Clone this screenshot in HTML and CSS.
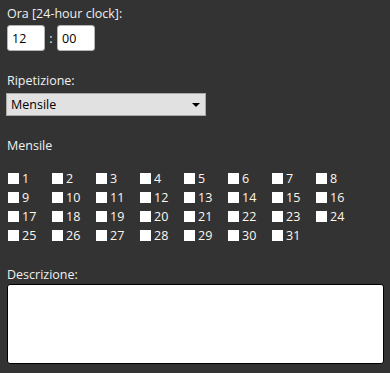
FILE: index.html
```html
<!DOCTYPE html>
<html lang="it">
<head>
  <meta charset="UTF-8">
  <title>Ripetizione</title>
  <link rel="stylesheet" href="styles.css">
</head>
<body>
  <form class="form" onsubmit="return false;">
    <div class="field">
      <label class="label">Ora [24-hour clock]:</label>
      <div class="time-row">
        <input type="text" class="time-input" value="12">
        <span class="colon">:</span>
        <input type="text" class="time-input" value="00">
      </div>
    </div>

    <div class="field">
      <label class="label">Ripetizione:</label>
      <div class="select">
        <span>Mensile</span>
        <span class="arrow"></span>
      </div>
    </div>

    <div class="field">
      <div class="section-title">Mensile</div>
      <div class="days" id="days"></div>
    </div>

    <div class="field">
      <label class="label">Descrizione:</label>
      <textarea class="desc"></textarea>
    </div>
  </form>

  <script>
    // days of the month
    const days = document.getElementById('days');
    for (let i = 1; i <= 31; i++) {
      const item = document.createElement('label');
      item.className = 'day';
      item.innerHTML = '<span class="box"></span>' + i;
      days.appendChild(item);
    }
  </script>
</body>
</html>
```

FILE: styles.css
```css
body {
  margin: 0;
  background: #333333;
  color: #f0f0f0;
  font-family: 'Open Sans', Arial, sans-serif;
  font-size: 12.5px;
}
.form {
  padding: 6px 6px 0 7px;
}
.field {
  margin-bottom: 22px;
}
.label, .section-title {
  display: block;
  line-height: 16px;
}
.time-row {
  display: flex;
  align-items: center;
  margin-top: 3px;
}
.time-input {
  width: 38px;
  height: 26px;
  box-sizing: border-box;
  border: 1px solid #b4b4b4;
  border-radius: 3px;
  padding: 0 4px;
  font-family: inherit;
  font-size: 12.5px;
  color: #000;
  background: #fff;
}
.colon {
  width: 12px;
  text-align: center;
}
.select {
  margin-top: 4px;
  margin-left: -1px;
  width: 200px;
  height: 23px;
  box-sizing: border-box;
  border: 1px solid #a9a9a9;
  background: #e1e1e1;
  color: #000;
  display: flex;
  align-items: center;
  justify-content: space-between;
  padding: 0 5px 0 4px;
}
.arrow {
  width: 0;
  height: 0;
  border-left: 4px solid transparent;
  border-right: 4px solid transparent;
  border-top: 4px solid #000;
}
.section-title {
  margin-top: 18px;
  margin-bottom: 15px;
}
.days {
  display: grid;
  grid-template-columns: repeat(8, 44px);
  grid-auto-rows: 19px;
  margin-left: 1px;
}
.day {
  display: flex;
  align-items: center;
  color: #fff8ec;
}
.box {
  width: 11px;
  height: 11px;
  background: #fff;
  margin-right: 3px;
}
.desc {
  display: block;
  margin-top: 1px;
  width: 377px;
  height: 80px;
  box-sizing: border-box;
  border: 1px solid #000;
  border-radius: 3px;
  background: #fff;
  resize: none;
}
```
